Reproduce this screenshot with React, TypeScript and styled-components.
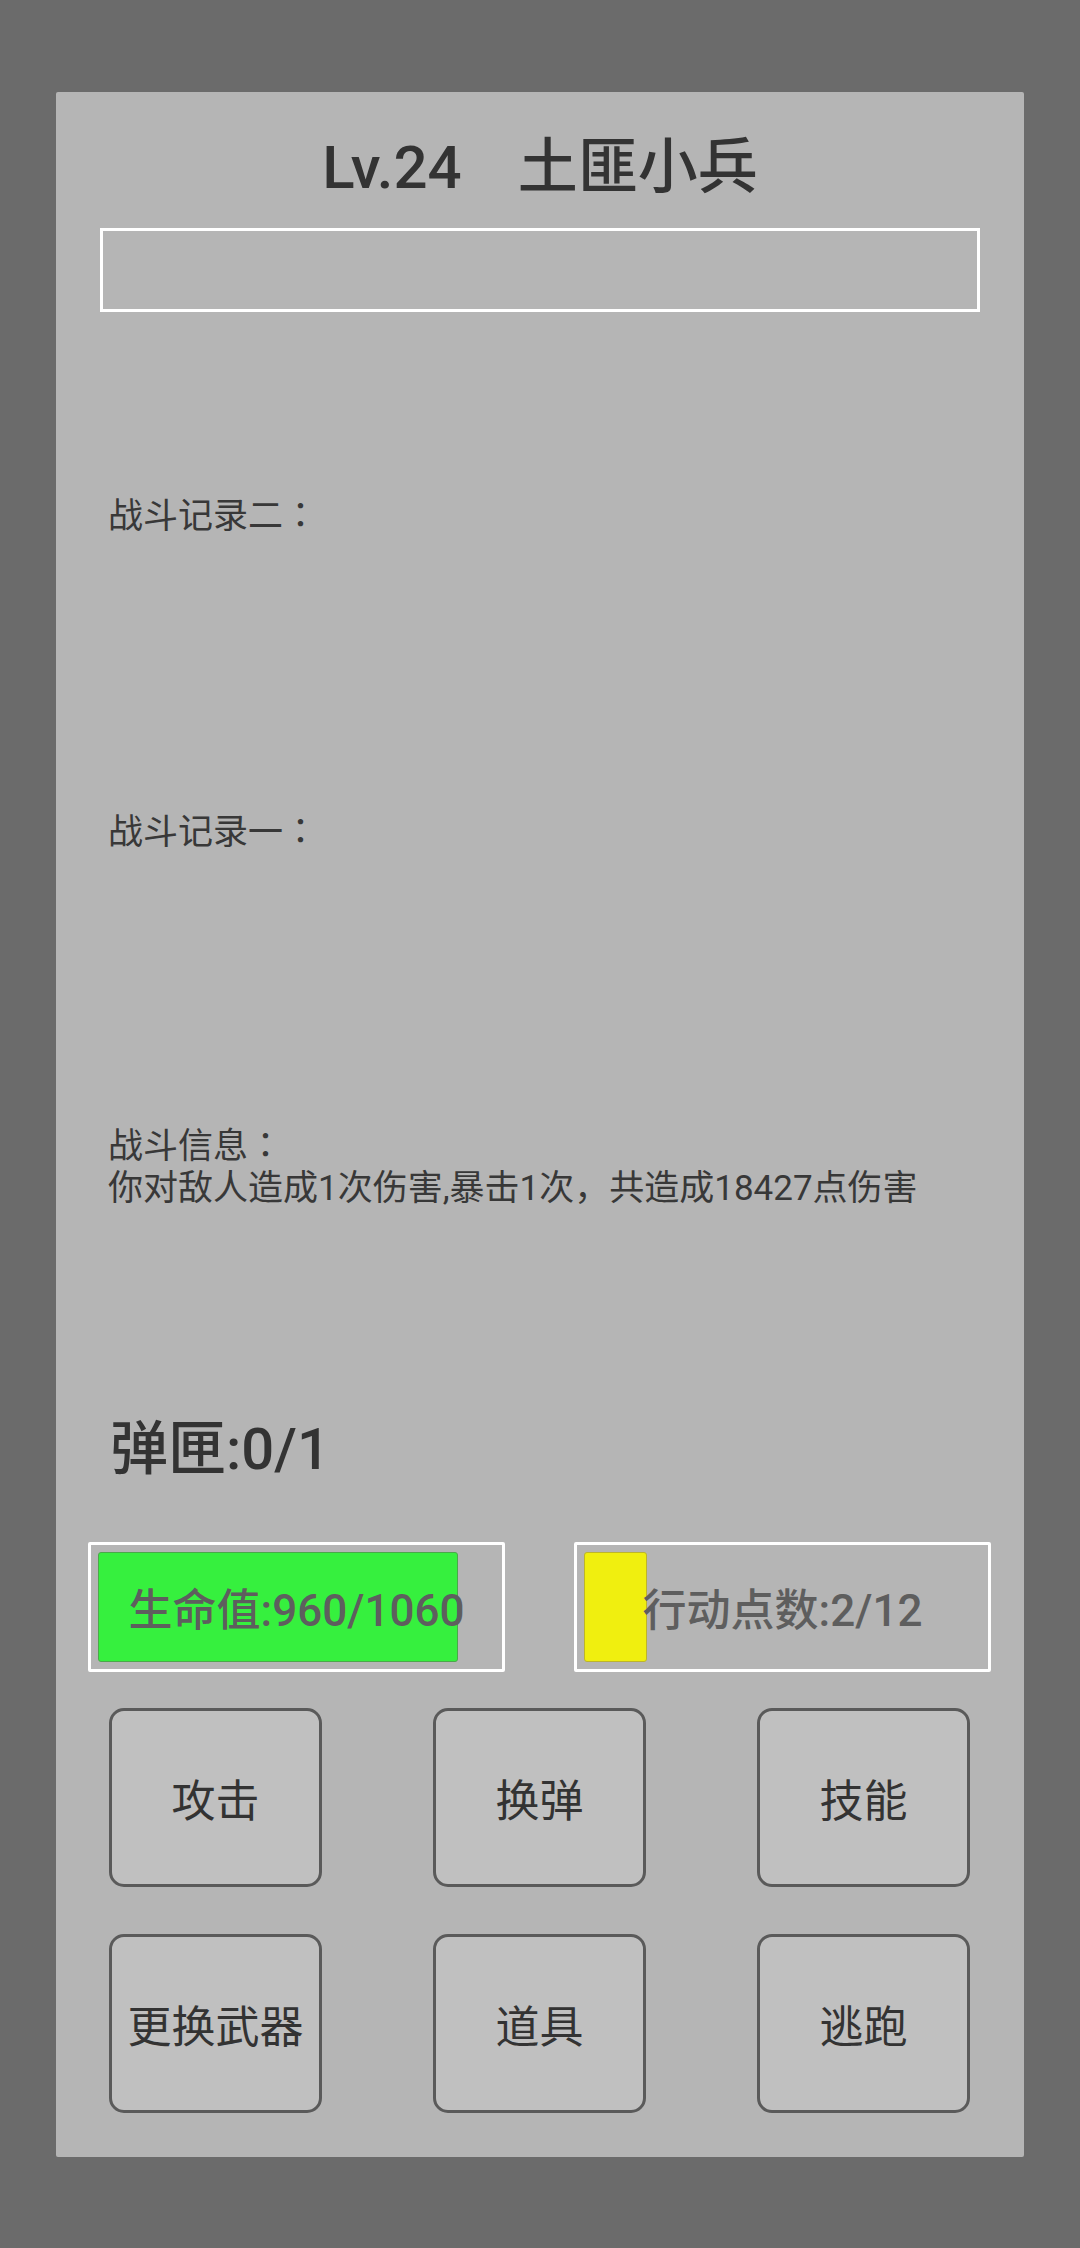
import React from "react";
import styled, { createGlobalStyle } from "styled-components";

const GlobalStyle = createGlobalStyle`
  html, body {
    margin: 0;
    padding: 0;
    background-color: #6b6b6b;
  }
  body {
    font-family: Roboto, "Noto Sans CJK SC", sans-serif;
  }
`;

const logs = [
  { title: "战斗记录二", lines: [] as string[], height: 316 },
  { title: "战斗记录一", lines: [] as string[], height: 314 },
  {
    title: "战斗信息",
    lines: ["你对敌人造成1次伤害,暴击1次，共造成18427点伤害"],
    height: 287,
  },
];

const actions = ["攻击", "换弹", "技能", "更换武器", "道具", "逃跑"];

export default function App() {
  const hp = { cur: 960, max: 1060 };
  const ap = { cur: 2, max: 12 };

  return (
    <>
      <GlobalStyle />
      <Screen>
        <Panel>
          <Title>
            <span>Lv.24</span>
            <span>土匪小兵</span>
          </Title>
          <NameBox />
          <LogList>
            {logs.map((log) => (
              <LogBlock key={log.title} height={log.height}>
                <LogLine>
                  {log.title}
                  <Colon>：</Colon>
                </LogLine>
                {log.lines.map((line) => (
                  <LogLine key={line}>{line}</LogLine>
                ))}
              </LogBlock>
            ))}
          </LogList>
          <Ammo>弹匣:0/1</Ammo>
          <BarRow>
            <Bar>
              <Fill
                color="#36f03e"
                edge="#4aa84a"
                style={{ width: `${(hp.cur / hp.max) * 100}%` }}
              />
              <BarLabel>
                生命值:{hp.cur}/{hp.max}
              </BarLabel>
            </Bar>
            <Bar>
              <Fill
                color="#f0ef0f"
                edge="#bdb52a"
                style={{ width: `${(ap.cur / ap.max) * 95}%` }}
              />
              <BarLabel>
                行动点数:{ap.cur}/{ap.max}
              </BarLabel>
            </Bar>
          </BarRow>
          <ActionGrid>
            {actions.map((a) => (
              <ActionButton key={a}>{a}</ActionButton>
            ))}
          </ActionGrid>
        </Panel>
      </Screen>
    </>
  );
}

const Screen = styled.div`
  width: 1080px;
  min-height: 2248px;
  padding: 92px 56px 0;
  box-sizing: border-box;
`;

const Panel = styled.div`
  display: flex;
  flex-direction: column;
  background-color: #b5b5b5;
  border-radius: 2px;
  padding: 36px 0 44px;
  box-sizing: border-box;
`;

const Title = styled.div`
  display: flex;
  justify-content: center;
  gap: 56px;
  height: 80px;
  line-height: 80px;
  font-size: 60px;
  font-weight: 500;
  color: #333333;
`;

const NameBox = styled.div`
  margin: 20px 44px 0;
  height: 84px;
  border: 3px solid #ffffff;
  box-sizing: border-box;
`;

const LogList = styled.div`
  display: flex;
  flex-direction: column;
  padding: 180px 52px 0;
`;

const LogBlock = styled.div<{ height: number }>`
  display: flex;
  flex-direction: column;
  height: ${(props) => props.height}px;
`;

const LogLine = styled.div`
  font-size: 35px;
  line-height: 42px;
  color: #383838;
  white-space: nowrap;
`;

const Colon = styled.span`
  font-family: "Noto Sans CJK TC", sans-serif;
`;

const Ammo = styled.div`
  padding: 0 54px;
  font-size: 58px;
  line-height: 80px;
  font-weight: 500;
  color: #333333;
`;

const BarRow = styled.div`
  display: flex;
  justify-content: space-between;
  margin: 53px 33px 0 32px;
`;

const Bar = styled.div`
  position: relative;
  display: flex;
  width: 417px;
  height: 130px;
  padding: 7px;
  border: 3px solid #ffffff;
  border-radius: 2px;
  box-sizing: border-box;
`;

const Fill = styled.div<{ color: string; edge: string }>`
  height: 100%;
  background-color: ${(props) => props.color};
  border: 1px solid ${(props) => props.edge};
  border-radius: 3px;
  box-sizing: border-box;
`;

const BarLabel = styled.div`
  position: absolute;
  inset: 0;
  display: flex;
  align-items: center;
  justify-content: center;
  font-size: 44px;
  font-weight: 500;
  color: #5e5e5e;
  white-space: nowrap;
`;

const ActionGrid = styled.div`
  display: grid;
  grid-template-columns: repeat(3, 213px);
  grid-auto-rows: 179px;
  justify-content: space-between;
  row-gap: 47px;
  margin: 36px 54px 0 53px;
`;

const ActionButton = styled.button`
  display: flex;
  align-items: center;
  justify-content: center;
  padding: 0;
  background-color: #c0c0c0;
  border: 3px solid #5a5a5a;
  border-radius: 15px;
  font-family: Roboto, "Noto Sans CJK SC", sans-serif;
  font-size: 44px;
  color: #333333;
  white-space: nowrap;
`;
